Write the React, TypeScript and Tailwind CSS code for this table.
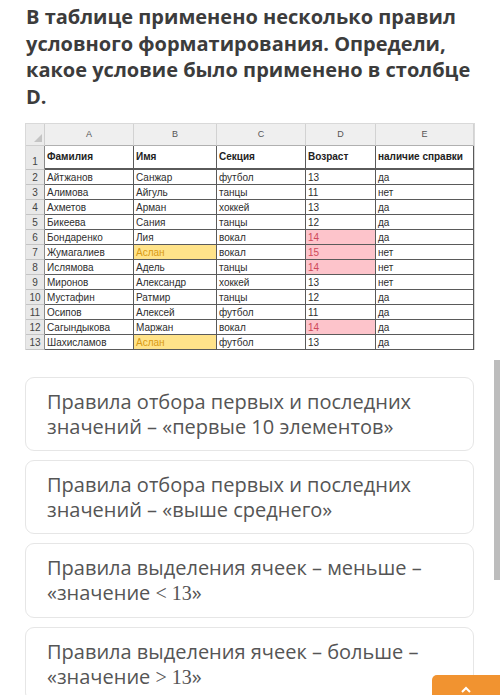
import React from "react";

type Row = {
  n: number;
  a: string;
  b: string;
  c: string;
  d: string;
  e: string;
  by?: boolean;
  dp?: boolean;
};

const rows: Row[] = [
  { n: 2, a: "Айтжанов", b: "Санжар", c: "футбол", d: "13", e: "да" },
  { n: 3, a: "Алимова", b: "Айгуль", c: "танцы", d: "11", e: "нет" },
  { n: 4, a: "Ахметов", b: "Арман", c: "хоккей", d: "13", e: "да" },
  { n: 5, a: "Бикеева", b: "Сания", c: "танцы", d: "12", e: "да" },
  { n: 6, a: "Бондаренко", b: "Лия", c: "вокал", d: "14", e: "да", dp: true },
  { n: 7, a: "Жумагалиев", b: "Аслан", c: "вокал", d: "15", e: "нет", by: true, dp: true },
  { n: 8, a: "Ислямова", b: "Адель", c: "танцы", d: "14", e: "нет", dp: true },
  { n: 9, a: "Миронов", b: "Александр", c: "хоккей", d: "13", e: "нет" },
  { n: 10, a: "Мустафин", b: "Ратмир", c: "танцы", d: "12", e: "да" },
  { n: 11, a: "Осипов", b: "Алексей", c: "футбол", d: "11", e: "да" },
  { n: 12, a: "Сагындыкова", b: "Маржан", c: "вокал", d: "14", e: "да", dp: true },
  { n: 13, a: "Шахисламов", b: "Аслан", c: "футбол", d: "13", e: "да", by: true },
];

const dataCell =
  "h-[15px] flex items-end pb-[1px] pl-[2px] leading-none border-r border-b border-[#5a5a5a] whitespace-nowrap overflow-hidden";
const numCell =
  "h-[15px] flex items-end justify-center pb-[1px] leading-none bg-[#e8e8e8] text-[#444] border-r border-b border-[#c4c4c4] border-r-[#8a8a8a]";

function Sheet() {
  return (
    <div
      className="ml-[25px] w-[450px] border-t border-l border-r border-[#d9d9d9] bg-white text-[10px] text-[#2e2e2e]"
      style={{ fontFamily: '"Liberation Sans", Arial, sans-serif' }}
    >
      <div className="grid grid-cols-[19px_89px_83px_89px_70px_98px]">
        {/* column letters */}
        <div className="h-[22px] bg-[#ececec] border-r border-b border-[#cfcfcf] relative">
          <div className="absolute right-[2px] bottom-[3px] w-0 h-0 border-l-[8px] border-l-transparent border-b-[8px] border-b-[#c4c4c4]" />
        </div>
        {["A", "B", "C", "D", "E"].map((l) => (
          <div
            key={l}
            className="h-[22px] bg-[#efefef] border-r border-b border-[#d2d2d2] border-b-[#b0b0b0] flex items-center justify-center text-[9px] text-[#555]"
          >
            {l}
          </div>
        ))}

        {/* header row 1 */}
        <div className="h-[24px] flex items-end justify-center pb-[2px] leading-none bg-[#e8e8e8] text-[#444] border-r border-b border-[#8a8a8a] border-b-[#c4c4c4]">
          1
        </div>
        {["Фамилия", "Имя", "Секция", "Возраст", "наличие справки"].map((h) => (
          <div
            key={h}
            className="h-[24px] pt-[6px] pl-[2px] leading-none font-bold text-[#222] border-r border-b-2 border-[#5a5a5a] whitespace-nowrap"
          >
            {h}
          </div>
        ))}

        {rows.map((r) => (
          <React.Fragment key={r.n}>
            <div className={numCell + (r.n === 4 ? " bg-[#d9d9d9]" : "")}>{r.n}</div>
            <div className={dataCell}>{r.a}</div>
            <div className={dataCell + (r.by ? " bg-[#ffe38a] text-[#d99a12]" : "")}>{r.b}</div>
            <div className={dataCell}>{r.c}</div>
            <div className={dataCell + (r.dp ? " bg-[#fdc4cb] text-[#cf4a5a]" : "")}>{r.d}</div>
            <div className={dataCell}>{r.e}</div>
          </React.Fragment>
        ))}
      </div>
    </div>
  );
}

function Option({ children }: { children: React.ReactNode }) {
  return (
    <div className="border border-[#e6e6e6] rounded-[9px] px-[21px] py-[11px] text-[20px] leading-[25px] text-[#555]">
      {children}
    </div>
  );
}

const math = { fontFamily: '"Liberation Serif", "DejaVu Serif", serif', lineHeight: "25px" };

export default function App() {
  return (
    <div
      className="relative w-[500px] h-[695px] overflow-hidden bg-white"
      style={{ fontFamily: '"Open Sans", "Noto Sans", sans-serif' }}
    >
      <div className="pl-[26px] pr-[20px] pt-[4px] text-[20px] leading-[26.5px] font-bold text-[#3c3c3c]">
        В таблице применено несколько правил условного форматирования. Определи, какое условие было применено в столбце D.
      </div>

      <div className="mt-[13px]">
        <Sheet />
      </div>

      <div className="mt-[27px] ml-[25px] w-[449px] flex flex-col gap-[9px]">
        <Option>Правила отбора первых и последних значений – «первые 10 элементов»</Option>
        <Option>Правила отбора первых и последних значений – «выше среднего»</Option>
        <Option>
          Правила выделения ячеек – меньше – «значение <span style={math}>&lt; 13</span>»
        </Option>
        <Option>
          Правила выделения ячеек – больше – «значение <span style={math}>&gt; 13</span>»
        </Option>
      </div>

      {/* scrollbar thumb */}
      <div className="absolute right-0 top-[360px] w-[6px] h-[220px] bg-[#bdbdbd]" />

      {/* orange floating button */}
      <div className="absolute right-0 bottom-0 w-[68px] h-[20px] bg-[#f19330] rounded-tl-[5px] flex justify-center pt-[10px]">
        <svg width="12" height="8" viewBox="0 0 12 8" fill="none">
          <path d="M2 7 L6 3 L10 7" stroke="white" strokeWidth="2" />
        </svg>
      </div>
    </div>
  );
}
